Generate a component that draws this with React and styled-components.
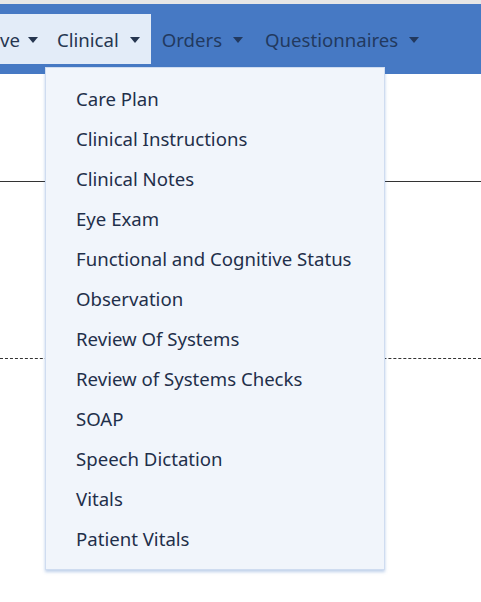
import React from 'react';
import styled, { createGlobalStyle } from 'styled-components';

const Global = createGlobalStyle`
  body {
    margin: 0;
    background: #ffffff;
    font-family: "Noto Sans", "Open Sans", sans-serif;
  }
`;

const Page = styled.div`
  position: relative;
  width: 481px;
  height: 602px;
  overflow: hidden;
  border-top: 4px solid #e6e6e6;
  box-sizing: border-box;
`;

const NavBar = styled.nav`
  height: 70px;
  background: #4679c4;
  display: flex;
  align-items: center;
`;

const Active = styled.div`
  display: flex;
  align-items: center;
  height: 50px;
  background: #e3ecf8;
`;

const NavItem = styled.div`
  display: flex;
  align-items: center;
  gap: ${p => (p.$first ? 8 : 11)}px;
  padding: 0 ${p => (p.$first ? 8 : 11)}px 0 ${p => (p.$first ? 0 : 11)}px;
  font-size: 18.6px;
  color: ${p => (p.$on ? '#263650' : '#22395f')};
  white-space: nowrap;
  cursor: pointer;
`;

const Caret = styled.span`
  width: 0;
  height: 0;
  border-left: 5px solid transparent;
  border-right: 5px solid transparent;
  border-top: 6px solid ${p => (p.$on ? '#263650' : '#22395f')};
  margin-top: 1px;
`;

const Content = styled.div`
  padding-top: 107px;
`;

const Rule = styled.hr`
  margin: 0;
  border: 0;
  border-top: 1px ${p => (p.$dashed ? 'dashed' : 'solid')} #333;
  margin-bottom: ${p => p.$gap || 0}px;
`;

const Menu = styled.ul`
  position: absolute;
  top: 63px;
  left: 45px;
  width: 340px;
  box-sizing: border-box;
  margin: 0;
  padding: 11px 0 10px;
  list-style: none;
  background: #f1f5fb;
  border: 1px solid #cfdcf0;
  box-shadow: 0 2px 3px rgba(70, 121, 196, 0.35);
`;

const MenuItem = styled.li`
  height: 40px;
  line-height: 40px;
  padding-left: 30px;
  font-size: 18.6px;
  color: #1f2f4a;
  cursor: pointer;
`;

const items = [
  'Care Plan',
  'Clinical Instructions',
  'Clinical Notes',
  'Eye Exam',
  'Functional and Cognitive Status',
  'Observation',
  'Review Of Systems',
  'Review of Systems Checks',
  'SOAP',
  'Speech Dictation',
  'Vitals',
  'Patient Vitals',
];

export default function App() {
  return (
    <Page>
      <Global />
      <NavBar>
        <Active>
          <NavItem $on $first>
            ve <Caret $on />
          </NavItem>
          <NavItem $on>
            Clinical <Caret $on />
          </NavItem>
        </Active>
        <NavItem>
          Orders <Caret />
        </NavItem>
        <NavItem>
          Questionnaires <Caret />
        </NavItem>
      </NavBar>
      <Content>
        <Rule $gap={176} />
        <Rule $dashed />
      </Content>
      <Menu>
        {items.map(i => (
          <MenuItem key={i}>{i}</MenuItem>
        ))}
      </Menu>
    </Page>
  );
}
